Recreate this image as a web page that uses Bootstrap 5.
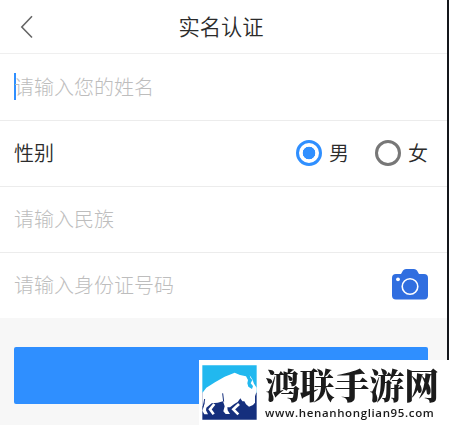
<!DOCTYPE html>
<html lang="zh-CN">
<head>
<meta charset="utf-8">
<meta name="viewport" content="width=device-width, initial-scale=1">
<title>实名认证</title>
<link href="https://cdn.jsdelivr.net/npm/bootstrap@5.3.0/dist/css/bootstrap.min.css" rel="stylesheet">
<style>
body{font-family:"Noto Sans CJK SC",sans-serif;font-size:20px;font-weight:350;line-height:30px;color:#2b2b2b;background:#f7f7f7;overflow:hidden}
.screen{height:425px;border-right:2px solid #14161b}
.topbar{height:54px;border-bottom:1px solid #efefef;font-size:21.3px;padding:0 5px 1px 0}
.back{left:20px;top:15px}
.field{height:66px;padding:0 19px 2px 14px;border-bottom:1px solid #ececec}
.field:first-child{height:67px;padding-bottom:1px}
.field:last-child{height:65px;border-bottom:0}
.hint{color:#bdbdbd;font-weight:300}
.caret{width:2px;height:27px;background:#2f8fff;margin-right:-2px}
.choice{width:26px;height:26px;border:3px solid #777;border-radius:50%;margin:0 7px 0 0}
.choice.on{border-color:#2f8fff;background:radial-gradient(circle,#2f8fff 6px,#fff 6.6px)}
.choice-next{margin-left:26px}
.actions{padding:29px 19px 0 14px}
.submit{height:57px;background:#2f8fff;border:0;border-radius:2px}
.brand{width:250px;height:65px;padding:5px 0 0 3px;color:#1b1b1b}
.brand-name{font-family:"Noto Serif CJK SC","Noto Sans CJK SC",serif;font-weight:900;font-size:34.8px;line-height:39px;height:42px;white-space:nowrap}
.brand-url{font-family:"Open Sans",sans-serif;font-weight:600;font-size:11.5px;line-height:12px;letter-spacing:.63px;white-space:nowrap}
</style>
<script src="https://cdn.jsdelivr.net/npm/bootstrap@5.3.0/dist/js/bootstrap.bundle.min.js"></script>
</head>
<body>
<div class="screen position-relative">
  <header class="topbar bg-white d-flex align-items-center justify-content-center position-relative">
    <svg class="back position-absolute" width="14" height="24" viewBox="0 0 14 24" fill="none" stroke="#666" stroke-width="1.6"><path d="M12 1.3 1.8 12 12 22.5"/></svg>
    <span>实名认证</span>
  </header>
  <main class="bg-white">
    <div class="field d-flex align-items-center"><span class="caret"></span><span class="hint">请输入您的姓名</span></div>
    <div class="field d-flex align-items-center">
      <span class="me-auto">性别</span>
      <span class="choice on"></span><span>男</span>
      <span class="choice choice-next"></span><span>女</span>
    </div>
    <div class="field d-flex align-items-center"><span class="hint">请输入民族</span></div>
    <div class="field d-flex align-items-center justify-content-between">
      <span class="hint">请输入身份证号码</span>
      <svg width="36" height="31" viewBox="0 0 36 31"><path fill="#306ee0" d="M4 5h5l2-3.500Q12 0 14 0h8q2 0 3 1.500L27 5h5q4 0 4 4v17.500q0 4-4 4H4q-4 0-4-4V9q0-4 4-4z"/><circle cx="18" cy="17.500" r="7.800" fill="none" stroke="#fff" stroke-width="1.600"/><circle cx="6" cy="10.300" r="1.900" fill="#fff"/></svg>
    </div>
  </main>
  <div class="actions"><button class="submit w-100 d-block" type="button" aria-label="提交"></button></div>
</div>
<div class="brand bg-white position-fixed bottom-0 end-0 d-flex">
  <svg class="flex-shrink-0" width="55" height="55" viewBox="37 75 165 165">
    <path fill="#21b8ef" d="M38 76h163v82H38z"/><path fill="#152f7d" d="M38 158h163v81H38z"/>
    <path fill="#fff" d="M38 159 50 143 76 127 105 110 135 98 151 105 169 109 175 120 173 130 176 140 187 147 190 138 183 130 188 120 182 113 180 106 188 118 193 131 201 143V154L196 169V188L190 195 178 200 169 193 164 184 158 184 152 175 144 186 134 192 121 202 113 202 114 211 121 222H108L101 214 105 199 100 184 84 188 66 190 50 203 49 211 55 223H44L38 212 42 200 46 184 38 200z"/>
    <path fill="none" stroke="#fff" stroke-width="8" d="M74 192 61 208 72 223M148 192 131 208 146 223"/>
    <path fill="none" stroke="#152f7d" stroke-width="3" d="M99 160l3 25M45 177l-4 22"/>
  </svg>
  <div class="ps-2"><div class="brand-name">鸿联手游网</div><div class="brand-url">www.henanhonglian95.com</div></div>
</div>
</body>
</html>
